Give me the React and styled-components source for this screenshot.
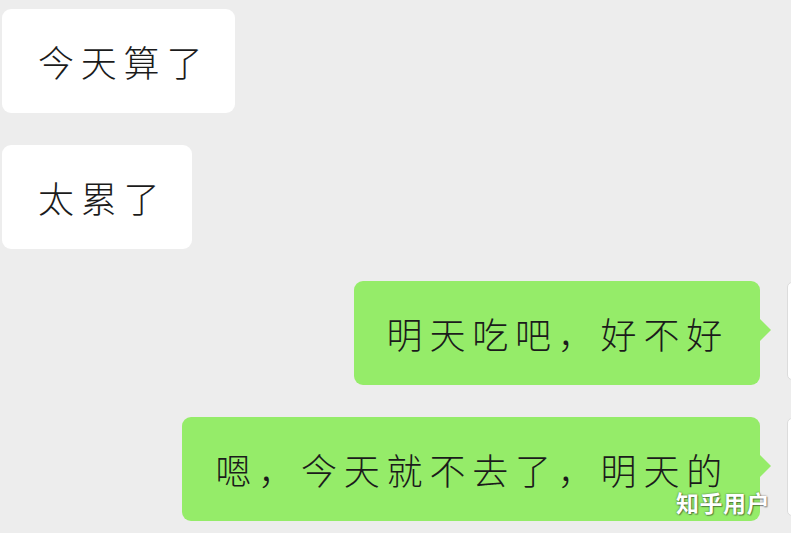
import React from "react";
import styled, { createGlobalStyle } from "styled-components";

const GlobalStyle = createGlobalStyle`
  html, body {
    margin: 0;
    padding: 0;
    background: #ededed;
  }
  body {
    font-family: "Noto Sans CJK SC", "Noto Sans", sans-serif;
  }
`;

const Screen = styled.div`
  position: relative;
  width: 791px;
  height: 533px;
  overflow: hidden;
  background: #ededed;
  display: flex;
  flex-direction: column;
  gap: 32px;
  padding-top: 9px;
  box-sizing: border-box;
`;

const Row = styled.div`
  display: flex;
  align-items: flex-start;
  justify-content: ${(p) => (p.mine ? "flex-end" : "flex-start")};
  padding-left: ${(p) => (p.mine ? "0" : "2px")};
  margin-right: ${(p) => (p.mine ? "-92px" : "0")};
  gap: 27px;
`;

const Bubble = styled.div`
  position: relative;
  height: 104px;
  display: flex;
  align-items: center;
  box-sizing: border-box;
  padding: 0 ${(p) => (p.mine ? "31px 0 33px" : "26px 0 36px")};
  border-radius: 9px;
  background: ${(p) => (p.mine ? "#95ec69" : "#ffffff")};
  color: #1b1b1b;
  font-size: 36px;
  font-weight: 300;
  line-height: 1;
  letter-spacing: 6.8px;
  white-space: nowrap;

  &::after {
    content: "";
    display: ${(p) => (p.mine ? "block" : "none")};
    position: absolute;
    right: -11px;
    top: 37px;
    width: 0;
    height: 0;
    border-top: 12px solid transparent;
    border-bottom: 12px solid transparent;
    border-left: 12px solid #95ec69;
  }
`;

const Avatar = styled.div`
  width: 96px;
  height: 98px;
  margin-top: 1px;
  flex-shrink: 0;
  background: #ffffff;
  border: 1px solid #dcdcdc;
  border-radius: 5px;
  box-sizing: border-box;
`;

const Watermark = styled.div`
  position: absolute;
  right: 21px;
  top: 491px;
  font-size: 23px;
  font-weight: 700;
  line-height: 1;
  color: #ffffff;
  letter-spacing: 0.5px;
  text-shadow: 0 0 2px rgba(0, 0, 0, 0.55), 1px 1px 1px rgba(0, 0, 0, 0.35);
`;

const messages = [
  { text: "今天算了", mine: false },
  { text: "太累了", mine: false },
  { text: "明天吃吧，好不好", mine: true },
  { text: "嗯，今天就不去了，明天的", mine: true },
];

export default function App() {
  return (
    <>
      <GlobalStyle />
      <Screen>
        {messages.map((m, i) => (
          <Row key={i} mine={m.mine}>
            <Bubble mine={m.mine}>{m.text}</Bubble>
            {m.mine && <Avatar />}
          </Row>
        ))}
        <Watermark>知乎用户</Watermark>
      </Screen>
    </>
  );
}
